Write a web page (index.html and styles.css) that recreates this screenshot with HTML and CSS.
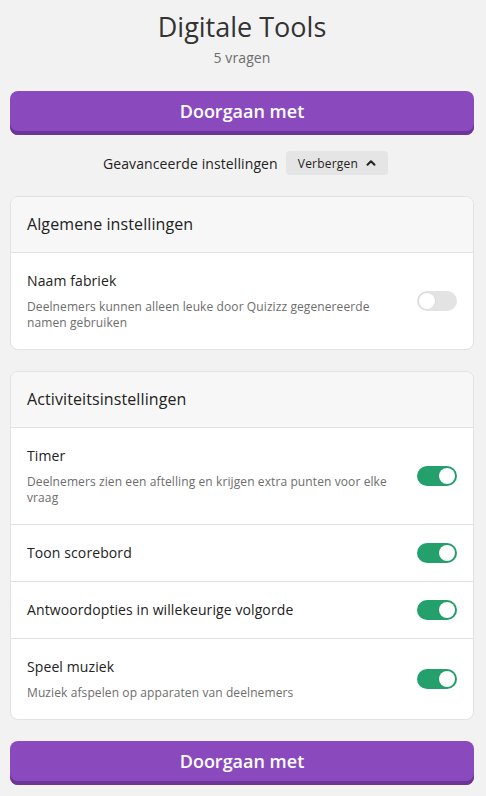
FILE: index.html
```html
<!DOCTYPE html>
<html lang="nl">
<head>
    <meta charset="UTF-8">
    <meta name="viewport" content="width=device-width, initial-scale=1.0">
    <title>Digitale Tools</title>
    <link rel="stylesheet" href="styles.css">
</head>
<body>

<div class="page">
    <h1 class="quiz-title">Digitale Tools</h1>
    <p class="quiz-count">5 vragen</p>

    <button class="start-btn">Doorgaan met</button>

    <div class="advanced">
        <span>Geavanceerde instellingen</span>
        <button class="chip">
            Verbergen
            <svg width="10" height="10" viewBox="0 0 10 10"><path d="M1.5 6.8 L5 3.3 L8.5 6.8" fill="none" stroke="#222" stroke-width="2" stroke-linecap="round" stroke-linejoin="round"/></svg>
        </button>
    </div>

    <div class="card">
        <div class="card-head">Algemene instellingen</div>
        <div class="row">
            <div class="row-text">
                <div class="row-title">Naam fabriek</div>
                <div class="row-desc">Deelnemers kunnen alleen leuke door Quizizz gegenereerde namen gebruiken</div>
            </div>
            <span class="toggle"></span>
        </div>
    </div>

    <div class="card">
        <div class="card-head">Activiteitsinstellingen</div>
        <div class="row">
            <div class="row-text">
                <div class="row-title">Timer</div>
                <div class="row-desc">Deelnemers zien een aftelling en krijgen extra punten voor elke vraag</div>
            </div>
            <span class="toggle on"></span>
        </div>
        <div class="row">
            <div class="row-text">
                <div class="row-title">Toon scorebord</div>
            </div>
            <span class="toggle on"></span>
        </div>
        <div class="row">
            <div class="row-text">
                <div class="row-title">Antwoordopties in willekeurige volgorde</div>
            </div>
            <span class="toggle on"></span>
        </div>
        <div class="row">
            <div class="row-text">
                <div class="row-title">Speel muziek</div>
                <div class="row-desc">Muziek afspelen op apparaten van deelnemers</div>
            </div>
            <span class="toggle on"></span>
        </div>
    </div>

    <button class="start-btn bottom">Doorgaan met</button>
</div>

</body>
</html>
```

FILE: styles.css
```css
body {
    margin: 0;
    background-color: #f2f2f2;
    font-family: "Open Sans", "Noto Sans", sans-serif;
    color: #222;
    letter-spacing: 0.1px;
}
.page {
    padding: 9px 12px 12px 10px;
    text-align: center;
}
.quiz-title {
    margin: 0;
    font-size: 27px;
    line-height: 36px;
    font-weight: 400;
    color: #333;
    letter-spacing: 0;
}
.quiz-count {
    margin: 3px 0 0;
    font-size: 14px;
    line-height: 20px;
    color: #6d6d6d;
}
.start-btn {
    display: block;
    width: 100%;
    height: 44px;
    margin-top: 23px;
    padding: 0 0 4px;
    border: none;
    border-radius: 8px;
    background-color: #8a4abe;
    box-shadow: inset 0 -4px 0 #6c3597;
    color: white;
    font-family: inherit;
    font-size: 18px;
    font-weight: 600;
    letter-spacing: 0;
}
.start-btn.bottom {
    margin-top: 20px;
}
.advanced {
    display: flex;
    justify-content: center;
    align-items: center;
    gap: 8px;
    margin: 16px 0 21px;
    padding-left: 7px;
    font-size: 14px;
}
.chip {
    display: flex;
    align-items: center;
    gap: 8px;
    height: 24px;
    padding: 0 12px;
    border: none;
    border-radius: 4px;
    background-color: #e5e5e5;
    color: #222;
    font-family: inherit;
    font-size: 12px;
    letter-spacing: 0.2px;
}
.card {
    margin-bottom: 21px;
    background: white;
    border: 1px solid #e2e2e2;
    border-radius: 8px;
    overflow: hidden;
    text-align: left;
}
.card-head {
    padding: 17px 16px 18px;
    background-color: #f7f7f7;
    font-size: 16px;
    line-height: 20px;
}
.row {
    display: flex;
    align-items: center;
    gap: 20px;
    padding: 18px 16px;
    border-top: 1px solid #e2e2e2;
}
.row-text {
    flex: 1;
}
.row-title {
    font-size: 14px;
    line-height: 20px;
}
.row-desc {
    margin-top: 8px;
    font-size: 12px;
    line-height: 16px;
    color: #6d6d6d;
}
.toggle {
    position: relative;
    width: 40px;
    height: 20px;
    border-radius: 10px;
    background-color: #e3e3e3;
    flex-shrink: 0;
}
.toggle::after {
    content: "";
    position: absolute;
    top: 2px;
    left: 2px;
    width: 16px;
    height: 16px;
    border-radius: 50%;
    background: white;
    box-shadow: 0 0 0 1px rgba(0, 0, 0, 0.04);
}
.toggle.on {
    background-color: #23a06b;
}
.toggle.on::after {
    left: 22px;
}
```
